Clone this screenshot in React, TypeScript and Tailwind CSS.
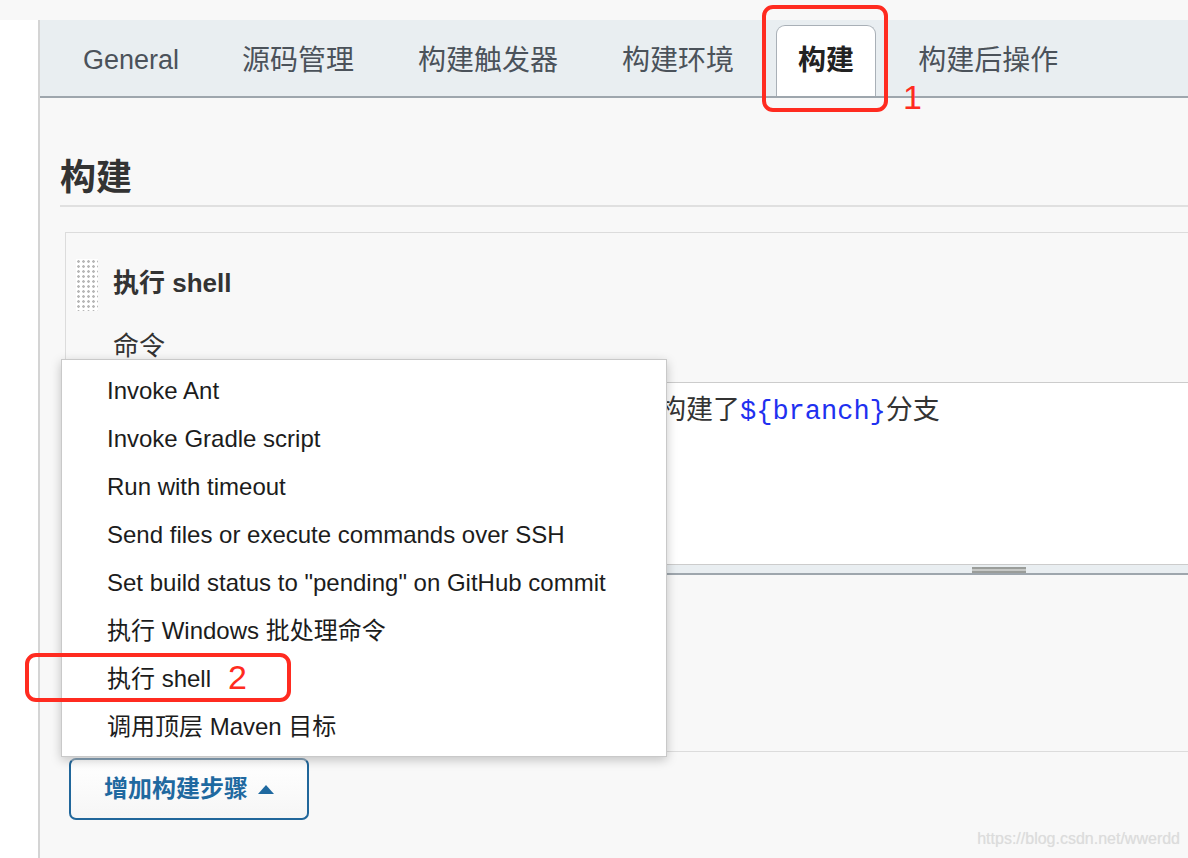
const sans = "font-['Liberation_Sans','Noto_Sans_CJK_SC',sans-serif]";

const tabs = ["General", "源码管理", "构建触发器", "构建环境", "构建", "构建后操作"];

const menuItems = [
  "Invoke Ant",
  "Invoke Gradle script",
  "Run with timeout",
  "Send files or execute commands over SSH",
  'Set build status to "pending" on GitHub commit',
  "执行 Windows 批处理命令",
  "执行 shell",
  "调用顶层 Maven 目标",
];

export default function App() {
  return (
    <div className={`relative w-[1188px] h-[858px] overflow-hidden bg-[#f8f8f8] ${sans}`}>
      <div className="h-[20px]" />
      <div className="flex h-[838px]">
        <div className="w-[40px] shrink-0 bg-white border-r-2 border-[#d4d4d4]" />
        <div className="flex-1 flex flex-col min-w-0">
          {/* tab bar */}
          <div className="h-[78px] bg-[#e9eef1] border-b-2 border-[#9ea6ad] flex items-end pl-[21px] gap-[20px]">
            {tabs.map((t, i) =>
              i === 4 ? (
                <div
                  key={t}
                  className="h-[71px] px-[21px] flex items-center bg-white border border-b-0 border-[#a9b0b7] rounded-t-[9px] text-[28px] font-bold text-[#222]"
                >
                  {t}
                </div>
              ) : (
                <div
                  key={t}
                  className={`h-[71px] px-[22px] flex items-center text-[#4b525a] ${i === 0 ? "text-[27px] mr-[-1px]" : "text-[28px]"}`}
                >
                  {t}
                </div>
              )
            )}
          </div>

          {/* content */}
          <div className="pl-[20px]">
            <h2 className="mt-[58px] pb-[6px] border-b-2 border-[#e0e0e0] text-[36px] leading-[43px] font-bold text-[#333]">
              构建
            </h2>

            <div className="mt-[25px] ml-[5px] h-[520px] border border-r-0 border-[#dcdcdc]">
              <div className="flex items-start pt-[26px] pl-[10px]">
                <div className="w-[22px] h-[52px] bg-white bg-[radial-gradient(circle,#b8b8b8_1px,transparent_1.6px)] bg-[length:5px_5px]" />
                <div className="ml-[15px] mt-[6px] text-[26px] leading-[36px] font-bold text-[#333]">执行 shell</div>
              </div>
              <div className="ml-[47px] mt-[18px] text-[26px] leading-[34px] text-[#333]">命令</div>
              <div className="ml-[47px] mt-[19px] border-t border-[#cccccc] bg-white">
                <div className="h-[181px] px-[5px] pt-[9px] text-[27px] leading-[36px] text-[#333] whitespace-nowrap">
                  <span className="inline-block w-[541px]" />
                  构建了
                  <span className="font-['Liberation_Mono',monospace] text-[#1f31f0]">{"${branch}"}</span>
                  分支
                </div>
                <div className="h-[11px] border-t border-[#cccccc] border-b-2 border-b-[#9ea6ad] bg-[#e9eef1] flex">
                  <div className="ml-[859px] mt-[2px] w-[54px] h-[6px] border-y-2 border-[#9a9d9a] bg-[#c6c8c6]" />
                </div>
              </div>
            </div>

            <button className="mt-[6px] ml-[9px] w-[240px] h-[62px] flex items-center pl-[33px] rounded-[7px] border-2 border-[#21679b] border-t-[#86a2b8] bg-gradient-to-b from-white to-[#f6f6f6] text-[24px] font-bold text-[#1f69a0]">
              增加构建步骤
              <span className="ml-[10px] w-0 h-0 border-x-[8px] border-x-transparent border-b-[9px] border-b-[#1f69a0]" />
            </button>
          </div>
        </div>
      </div>

      {/* dropdown menu */}
      <div className="absolute left-[61px] top-[359px] w-[606px] h-[398px] bg-white border border-[#c9c9c9] shadow-[0_3px_10px_rgba(0,0,0,0.22)] py-[7px]">
        {menuItems.map((m) => (
          <div key={m} className="h-[48px] flex items-center pl-[45px] text-[24px] text-[#1c1c1c] whitespace-nowrap">
            {m}
          </div>
        ))}
      </div>

      {/* annotations */}
      <div className="absolute left-[762px] top-[5px] w-[126px] h-[107px] border-[4px] border-[#ff2b20] rounded-[11px]" />
      <div className="absolute left-[903px] top-[79px] text-[34px] leading-[36px] text-[#ff2b20]">1</div>
      <div className="absolute left-[25px] top-[653px] w-[266px] h-[49px] border-[4px] border-[#ff2b20] rounded-[11px]" />
      <div className="absolute left-[228px] top-[659px] text-[34px] leading-[36px] text-[#ff2b20]">2</div>

      <div className="absolute right-[8px] top-[829px] text-[16px] leading-[20px] text-[#dcdcdc] [text-shadow:0_0_1px_rgba(0,0,0,0.08)]">
        https://blog.csdn.net/wwerdd
      </div>
    </div>
  );
}
